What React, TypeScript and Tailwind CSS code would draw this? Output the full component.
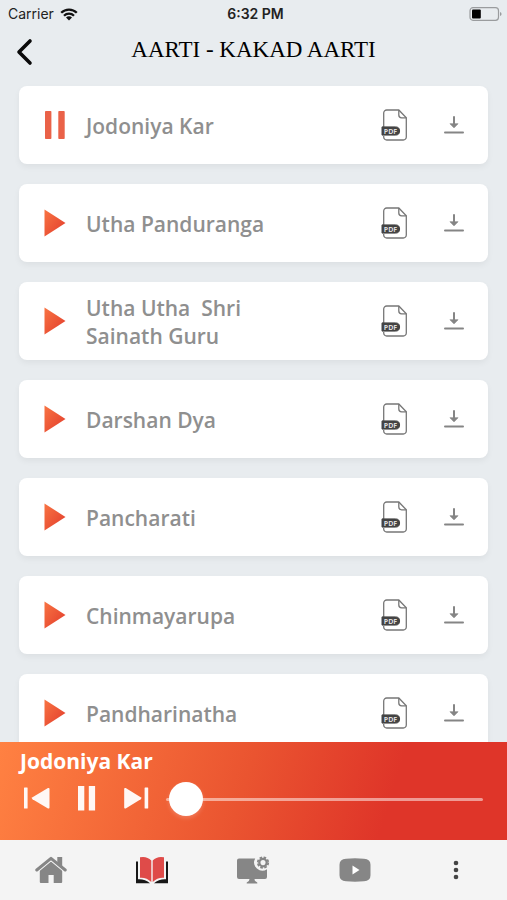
import { useState } from "react";

const TRACKS = [
  "Jodoniya Kar",
  "Utha Panduranga",
  "Utha Utha  Shri Sainath Guru",
  "Darshan Dya",
  "Pancharati",
  "Chinmayarupa",
  "Pandharinatha",
];

function StatusBar() {
  return (
    <div className="grid grid-cols-3 items-center h-7 pl-2 pr-1 font-['Inter','Liberation_Sans',sans-serif] text-sm text-[#222]">
      <div className="flex items-center gap-1.5">
        <span>Carrier</span>
        <svg width="18" height="13" viewBox="0 0 18 13" fill="none" stroke="#111" strokeWidth="2.3">
          <path d="M1.2 4.8a11 11 0 0 1 15.6 0M4 7.7a7.1 7.1 0 0 1 10 0" />
          <path d="M9 12.5 6 9.6a4.2 4.2 0 0 1 6 0z" fill="#111" stroke="none" />
        </svg>
      </div>
      <span className="text-center font-semibold">6:32 PM</span>
      <svg className="justify-self-end" width="34" height="14" viewBox="0 0 34 14" fill="none">
        <rect x="1" y=".7" width="28.5" height="12.6" rx="3" stroke="#9a9c9e" strokeWidth="1.2" />
        <rect x="3" y="2.6" width="8.8" height="8.8" rx="1" fill="#000" />
        <path d="M31 5v4q1.6-.6 1.6-2T31 5z" fill="#9a9c9e" />
      </svg>
    </div>
  );
}

function PlayIcon() {
  return (
    <svg width="22" height="28" viewBox="0 0 22 28">
      <defs>
        <linearGradient id="play" x1="0" y1="0" x2="1" y2="1">
          <stop offset="0" stopColor="#f87443" />
          <stop offset="1" stopColor="#e23b2b" />
        </linearGradient>
      </defs>
      <path d="M.5.5v27L21.5 14z" fill="url(#play)" />
    </svg>
  );
}

function PauseIcon() {
  return (
    <svg width="22" height="28" viewBox="0 0 22 28" fill="#ea6248">
      <rect x="1" y="0" width="6.4" height="28" rx=".8" />
      <rect x="14.3" y="0" width="6.4" height="28" rx=".8" />
    </svg>
  );
}

function PdfIcon() {
  return (
    <svg width="27" height="32" viewBox="0 0 27 32" fill="none" stroke="#777" strokeWidth="1.3">
      <path d="M2.7 18V4a3 3 0 0 1 3-3h12.1l7.5 7.8V28a3 3 0 0 1-3 3H5.7a3 3 0 0 1-3-3v-1" />
      <path d="M17.8 1v5a2.8 2.8 0 0 0 2.8 2.8h4.7" />
      <path d="M1 17.9h13.5a4.1 4.1 0 0 1 0 8.2H1z" fill="#444" stroke="#444" strokeWidth="1" />
      <text x="9.5" y="24.5" textAnchor="middle" fill="#ddd" stroke="none" className="font-['Open_Sans',sans-serif] text-[7px] font-bold">PDF</text>
    </svg>
  );
}

function DownloadIcon() {
  return (
    <svg width="20" height="18" viewBox="0 0 20 18" fill="none" stroke="#858585" strokeWidth="2" strokeLinecap="round">
      <path d="M10 1v9" />
      <path d="M6.3 8 10 11.8 13.7 8z" fill="#858585" strokeWidth=".8" strokeLinejoin="round" />
      <path d="M1 16.5h18" />
    </svg>
  );
}

function TrackCard({ name, playing, onToggle }: { name: string; playing: boolean; onToggle: () => void }) {
  return (
    <li className="flex items-center shrink-0 h-[78px] px-6 bg-white rounded-lg shadow-[0_3px_6px_rgba(0,0,0,0.05)]">
      <button onClick={onToggle} aria-label={playing ? `Pause ${name}` : `Play ${name}`} className="w-6 ml-px">
        {playing ? <PauseIcon /> : <PlayIcon />}
      </button>
      <span className="w-48 ml-[18px] pt-px text-[21px] leading-7 font-semibold text-[#8f8f8f] whitespace-pre-wrap">{name}</span>
      <div className="flex items-center gap-9 ml-auto">
        <button aria-label={`Open PDF of ${name}`}><PdfIcon /></button>
        <button aria-label={`Download ${name}`}><DownloadIcon /></button>
      </div>
    </li>
  );
}

function Player({ name, playing, onToggle }: { name: string; playing: boolean; onToggle: () => void }) {
  const [pos, setPos] = useState(1);

  return (
    <section className="shrink-0 h-[98px] px-5 pt-[5px] bg-[linear-gradient(107deg,#ff8142_0%,#ea5430_48%,#df3529_76%,#df3529_100%)] text-white">
      <h2 className="text-[21px] leading-7 font-bold">{name}</h2>
      <div className="flex items-center h-12 px-1">
        <div className="flex items-center gap-[25px]">
          <button aria-label="Previous">
            <svg width="26" height="26" viewBox="0 0 26 26" fill="#fff" fillOpacity=".95">
              <rect x="0" y="1.5" width="3.6" height="21" rx=".5" />
              <path d="M25.5 3v18.5q0 1.6-1.5.9L8.500 13.200q-1.500-1 0-2L24 2.100q1.500-.7 1.500.9z" />
            </svg>
          </button>
          <button onClick={onToggle} aria-label={playing ? "Pause" : "Play"}>
            <svg width="24" height="26" viewBox="0 0 24 26" fill="#fff" fillOpacity=".95">
              {playing ? <path d="M3 0h6.3v24.500H3zM13.8 0h6.3v24.500h-6.3z" /> : <path d="M4 0v24l18-12z" />}
            </svg>
          </button>
          <button aria-label="Next">
            <svg width="26" height="26" viewBox="0 0 26 26" fill="#fff" fillOpacity=".95">
              <path d="M.2 3v18.5q0 1.6 1.5.9l15-9.2q1.5-1 0-2l-15-9.1Q.2 1.400.2 3z" />
              <rect x="20.6" y="1.5" width="3.6" height="21" rx=".5" />
            </svg>
          </button>
        </div>
        <input
          type="range"
          min={0}
          max={100}
          value={pos}
          onChange={(e) => setPos(Number(e.target.value))}
          aria-label="Position"
          className="flex-1 min-w-0 h-9 ml-4 appearance-none bg-transparent [&::-webkit-slider-runnable-track]:h-[3px] [&::-webkit-slider-runnable-track]:rounded-full [&::-webkit-slider-runnable-track]:bg-white/50 [&::-webkit-slider-thumb]:appearance-none [&::-webkit-slider-thumb]:size-[34px] [&::-webkit-slider-thumb]:-mt-4 [&::-webkit-slider-thumb]:rounded-full [&::-webkit-slider-thumb]:bg-white [&::-webkit-slider-thumb]:shadow-[0_2px_4px_rgba(255,255,255,0.2)]"
        />
      </div>
    </section>
  );
}

function BottomNav() {
  return (
    <nav className="grid grid-cols-5 items-center shrink-0 h-[60px] bg-[#f4f4f4]">
      <a href="#home" aria-label="Home" className="justify-self-center">
        <svg width="32" height="28" viewBox="0 0 32 28" fill="#868686">
          <path d="M4.8 14 16 5l11.2 9V26a1 1 0 0 1-1 1h-7.5v-8h-5.2v8H5.8a1 1 0 0 1-1-1z" />
          <path d="M1.8 14 16 2.3 30.2 14" fill="none" stroke="#f4f4f4" strokeWidth="5" />
          <path d="M1.8 14 16 2.3 30.2 14" fill="none" stroke="#868686" strokeWidth="3" strokeLinecap="round" strokeLinejoin="round" />
          <path d="M22.3 1h4.9v10l-4.9-4z" />
        </svg>
      </a>
      <a href="#aarti" aria-label="Aarti" className="justify-self-center">
        <svg width="34" height="28" viewBox="0 0 34 28">
          <path d="M1 5.5h2v17.8q7-.4 12 3.9H1zM33 5.5h-2v17.8q-7-.4-12 3.9h14z" fill="#171717" />
          <path d="M5 1.2Q12-.2 16.3 4.5V26Q11.5 21.3 5 21.8z" fill="#df4b49" />
          <path d="M29 1.2Q22-.2 17.7 4.5V26q4.8-4.7 11.3-4.2z" fill="#df4b49" />
        </svg>
      </a>
      <a href="#live" aria-label="Live" className="justify-self-center">
        <svg width="34" height="28" viewBox="0 0 34 28" fill="#868686">
          <path d="M3 2.5h16.2a8.2 8.2 0 0 0 11.8 10.7V21a2 2 0 0 1-2 2H3a2 2 0 0 1-2-2V4.5a2 2 0 0 1 2-2z" />
          <path d="M13.5 23h5q0 2.7 2.8 3.5v1H10.7v-1q2.8-.8 2.8-3.5z" />
          <circle cx="27" cy="6.6" r="3.7" fill="none" stroke="#868686" strokeWidth="2.3" />
          <circle cx="27" cy="6.6" r="5.3" fill="none" stroke="#868686" strokeWidth="1.7" strokeDasharray="2.6 1.563" />
        </svg>
      </a>
      <a href="#videos" aria-label="Videos" className="justify-self-center">
        <svg width="32" height="24" viewBox="0 0 32 24">
          <path d="M7 .8q9-.9 18 0 6.5.4 6.5 6v10.4q0 5.6-6.5 6-9 .9-18 0-6.5-.4-6.5-6V6.8q0-5.6 6.5-6z" fill="#868686" />
          <path d="M13.5 7.5v9L20.5 12z" fill="#fff" />
        </svg>
      </a>
      <button aria-label="More" className="justify-self-center">
        <svg width="6" height="20" viewBox="0 0 6 20" fill="#444">
          <circle cx="3" cy="3" r="2.3" />
          <circle cx="3" cy="10" r="2.3" />
          <circle cx="3" cy="17" r="2.3" />
        </svg>
      </button>
    </nav>
  );
}

export default function App() {
  const [current, setCurrent] = useState(0);
  const [playing, setPlaying] = useState(true);

  const toggle = (i: number) => {
    if (i === current) { setPlaying(!playing); return; }
    setCurrent(i);
    setPlaying(true);
  };

  return (
    <div className="flex flex-col h-screen bg-[#e8ecef] font-['Open_Sans',sans-serif]">
      <StatusBar />
      <header className="grid grid-cols-[1fr_auto_1fr] items-center h-12 px-4">
        <button aria-label="Back" className="justify-self-start">
          <svg width="17" height="28" viewBox="0 0 17 28" fill="none" stroke="#0a0a0a" strokeWidth="3.6" strokeLinecap="round" strokeLinejoin="round">
            <path d="M14 3 3 14l11 11" />
          </svg>
        </button>
        <h1 className="pb-1 font-['Liberation_Serif',serif] text-[23px] leading-8 text-black">AARTI - KAKAD AARTI</h1>
      </header>
      <ul className="flex flex-col flex-1 min-h-0 gap-5 px-[19px] pt-2.5 overflow-y-auto [scrollbar-width:none]">
        {TRACKS.map((name, i) => (
          <TrackCard key={name} name={name} playing={playing && i === current} onToggle={() => toggle(i)} />
        ))}
      </ul>
      <Player name={TRACKS[current]} playing={playing} onToggle={() => toggle(current)} />
      <BottomNav />
    </div>
  );
}
